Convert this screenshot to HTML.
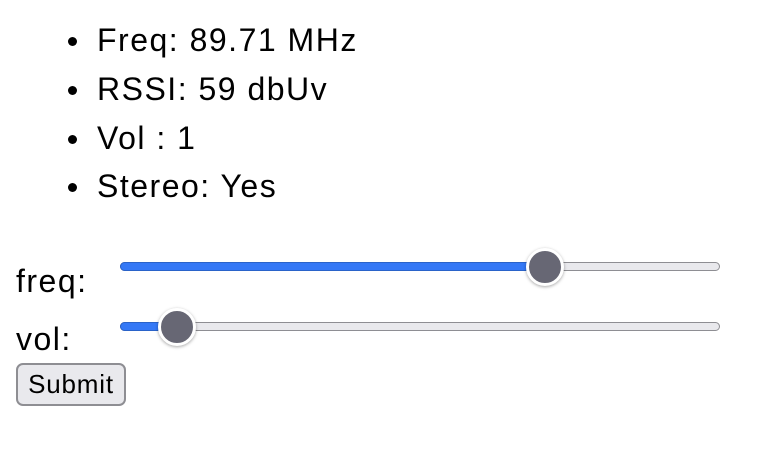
<!DOCTYPE html>
<html><head><style>
body{margin:0;width:778px;height:452px;background:#fff;font-family:"Liberation Sans",sans-serif;color:#000;position:relative;overflow:hidden}
.t{position:absolute;font-size:32px;line-height:32px;letter-spacing:1.5px;white-space:nowrap}
.b{position:absolute;width:9px;height:9px;border-radius:50%;background:#000}
.track{position:absolute;height:9px;border-radius:6px;background:#e9e9ed;border:1px solid #8e8e93;box-sizing:border-box}
.fill{position:absolute;height:9px;border-radius:6px;background:#3478f6;border:1px solid #2a63c9;box-sizing:border-box}
.thumb{position:absolute;width:38px;height:38px;border-radius:50%;background:#676774;border:3px solid #fff;box-sizing:border-box;box-shadow:0 1px 3px rgba(0,0,0,.35)}
.btn{position:absolute;left:16px;top:363px;width:110px;height:43px;box-sizing:border-box;border:2px solid #8e8e93;border-radius:7px;background:#e9e9ed;font-size:26px;letter-spacing:0.8px;line-height:39px;text-align:center}
</style></head><body>
<div class="b" style="left:68px;top:37px"></div><div class="t" style="left:97px;top:24px">Freq: 89.71 MHz</div>
<div class="b" style="left:68px;top:86px"></div><div class="t" style="left:97px;top:73px">RSSI: 59 dbUv</div>
<div class="b" style="left:68px;top:135px"></div><div class="t" style="left:97px;top:122px">Vol : 1</div>
<div class="b" style="left:68px;top:183px"></div><div class="t" style="left:97px;top:170px">Stereo: Yes</div>
<div class="t" style="left:16px;top:265px">freq:</div>
<div class="t" style="left:16px;top:323px">vol:</div>
<div class="track" style="left:120px;top:262px;width:600px"></div>
<div class="fill" style="left:120px;top:262px;width:430px"></div>
<div class="thumb" style="left:526px;top:248px"></div>
<div class="track" style="left:120px;top:322px;width:600px"></div>
<div class="fill" style="left:120px;top:322px;width:60px"></div>
<div class="thumb" style="left:158px;top:308px"></div>
<div class="btn">Submit</div>
</body></html>
